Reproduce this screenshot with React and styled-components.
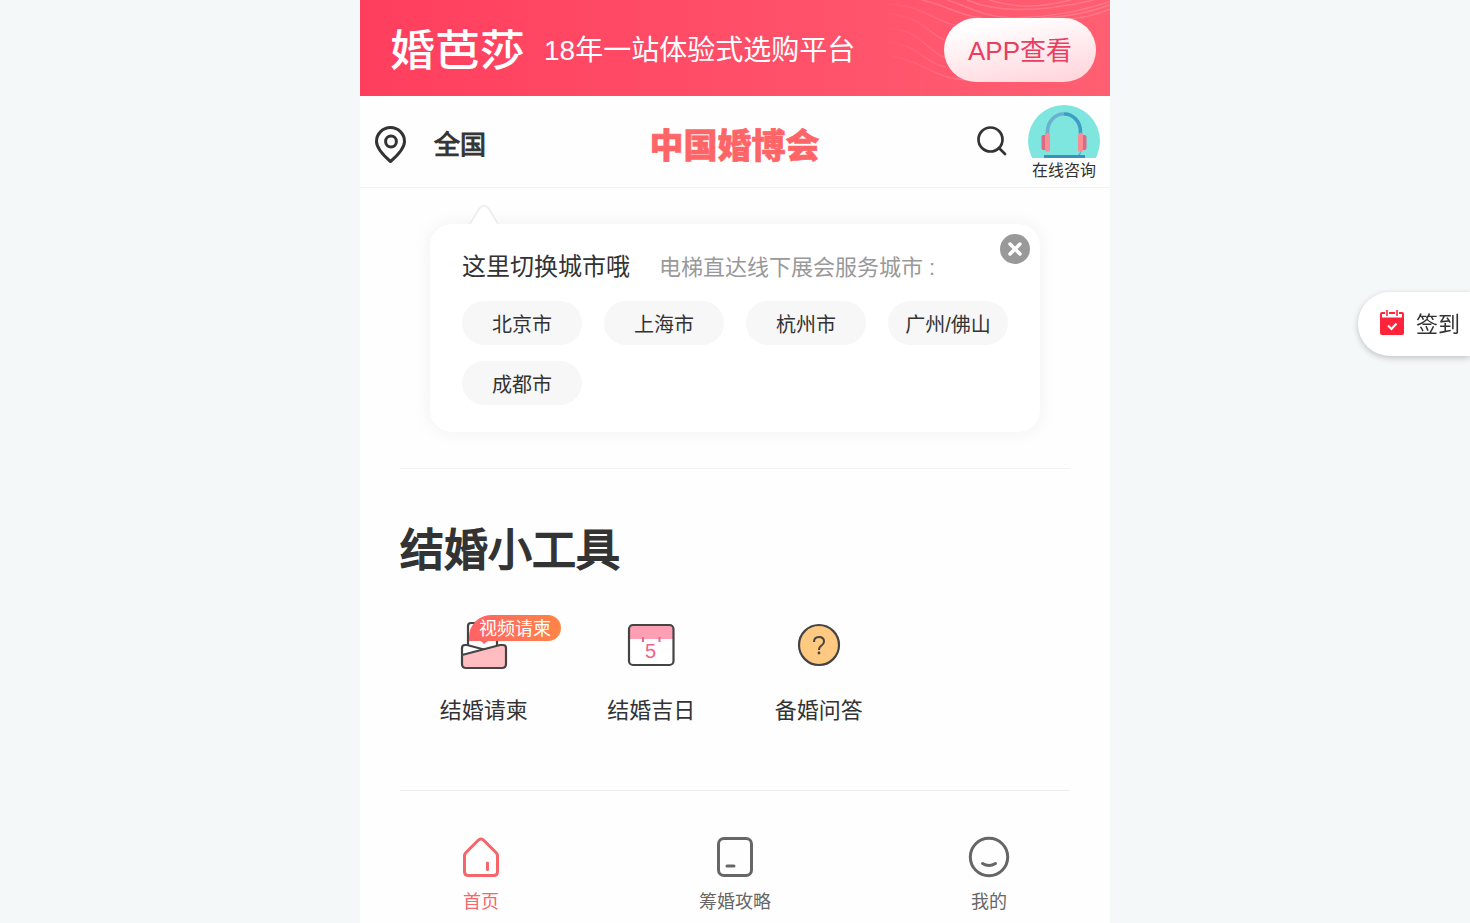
import React from "react";
import styled, { createGlobalStyle } from "styled-components";

const Global = createGlobalStyle`
  * { box-sizing: border-box; }
  body {
    margin: 0;
    background: #f4f8f9;
    color: #333;
    font-family: "Liberation Sans", "Noto Sans CJK SC", sans-serif;
    overflow: hidden;
  }
  svg { display: block; }
`;

const Page = styled.main`
  display: flex;
  flex-direction: column;
  width: 750px;
  height: 923px;
  margin: 0 auto;
  background: #fefefe;
`;

const Banner = styled.header`
  position: relative;
  display: flex;
  align-items: center;
  height: 96px;
  padding: 4px 14px 0 30px;
  background: linear-gradient(90deg, #ff3e5e, #ff5f72);
  color: #fff;
`;

const Waves = styled.svg`
  position: absolute;
  top: 0;
  right: 0;
`;

const BrandName = styled.span`
  width: 136px;
  padding-top: 3px;
  font-size: 45px;
  font-weight: 500;
  line-height: 60px;
  white-space: nowrap;
  transform: scaleY(0.96);
`;

const Slogan = styled.span`
  flex: 1;
  margin-left: 18px;
  padding-top: 1px;
  font-size: 28px;
  line-height: 40px;
`;

const AppButton = styled.button`
  position: relative;
  width: 152px;
  height: 64px;
  padding: 0 0 4px;
  border: 0;
  border-radius: 32px;
  background: linear-gradient(170deg, #fff 15%, #ffd2d9);
  color: #e83f61;
  font: inherit;
  font-size: 26px;
`;

const NavBar = styled.nav`
  display: flex;
  align-items: center;
  justify-content: space-between;
  flex: none;
  height: 92px;
  padding: 4px 10px 0 13px;
  border-bottom: 1px solid #f2f2f2;
`;

const NavSide = styled.div`
  display: flex;
  align-items: center;
  width: 200px;
  gap: ${(p) => p.$gap}px;
  justify-content: ${(p) => (p.$end ? "flex-end" : "flex-start")};
`;

const City = styled.span`
  padding-top: 2px;
  font-size: 26px;
  font-weight: 400;
  -webkit-text-stroke: 1px #333;
  line-height: 38px;
`;

const ExpoName = styled.h1`
  margin: 4px 4px 0 0;
  color: #ff6466;
  font-size: 34px;
  font-weight: 900;
  line-height: 44px;
  -webkit-text-stroke: 0.6px #ff6466;
`;

const Consult = styled.div`
  width: 72px;
  text-align: center;
  font-size: 16px;
  line-height: 25px;
  white-space: nowrap;
`;

const PopoverArea = styled.section`
  padding: 36px 70px;
`;

const Popover = styled.div`
  position: relative;
  height: 208px;
  padding: 21px 32px;
  border-radius: 22px;
  background: #fff;
  box-shadow: 0 0 20px rgba(0, 0, 0, 0.06);
`;

const PopoverTip = styled.svg`
  position: absolute;
  left: 38px;
  top: -20px;
`;

const CloseIcon = styled.svg`
  position: absolute;
  top: 10px;
  right: 10px;
`;

const PopoverHeading = styled.div`
  display: flex;
  align-items: center;
  height: 38px;
  gap: 29px;
  font-size: 24px;
`;

const Hint = styled.span`
  padding-top: 1px;
  color: #999;
  font-size: 22px;
`;

const CityGrid = styled.div`
  display: grid;
  grid-template-columns: repeat(4, 120px);
  gap: 16px 22px;
  margin-top: 18px;
`;

const CityChip = styled.span`
  height: 44px;
  border-radius: 22px;
  background: #f7f7f7;
  font-size: 20px;
  line-height: 48px;
  text-align: center;
`;

const Tools = styled.section`
  height: 323px;
  margin: 0 40px;
  border-top: 1px solid #f2f2f2;
  border-bottom: 1px solid #ededed;
`;

const ToolsTitle = styled.h2`
  margin: 49px 0 0;
  font-size: 44px;
  font-weight: 400;
  -webkit-text-stroke: 1.8px #333;
  line-height: 66px;
`;

const ToolGrid = styled.div`
  display: grid;
  grid-template-columns: repeat(4, 1fr);
  margin-top: 29px;
`;

const Tool = styled.div`
  position: relative;
  display: flex;
  flex-direction: column;
  align-items: center;
  gap: 21px;
  font-size: 22px;
  line-height: 34px;
`;

const Badge = styled.span`
  position: absolute;
  top: 2px;
  left: 69px;
  width: 92px;
  height: 26px;
  border-radius: 22px 13px 13px 0;
  background: linear-gradient(90deg, #ff6266, #ff8547);
  color: #fff;
  font-size: 18px;
  line-height: 28px;
  text-align: center;
`;

const TabBar = styled.footer`
  display: flex;
  justify-content: space-between;
  margin-top: 42px;
  padding: 0 67px;
`;

const Tab = styled.div`
  display: flex;
  flex-direction: column;
  align-items: center;
  gap: 10px;
  width: 108px;
  color: ${(p) => (p.$active ? "#f5666b" : "#666")};
  font-size: 18px;
  line-height: 28px;
`;

const SignIn = styled.aside`
  position: fixed;
  top: 292px;
  right: 0;
  display: flex;
  align-items: center;
  gap: 11px;
  width: 112px;
  height: 64px;
  padding: 0 0 4px 21px;
  border-radius: 32px 0 0 32px;
  background: #fff;
  box-shadow: 0 2px 6px rgba(0, 0, 0, 0.22);
  font-size: 22px;
  white-space: nowrap;
`;

const cities = ["北京市", "上海市", "杭州市", "广州/佛山", "成都市"];

const PinIcon = () => (
  <svg width="36" height="40" viewBox="0 -1 36 40" fill="none" stroke="#333" strokeWidth="3">
    <path d="M17.5 36.5C10 30 3.5 23.500 3.500 16.500a14 14 0 0 1 28 0C31.500 23.500 25 30 17.500 36.500Z" strokeLinejoin="round" />
    <circle cx="18" cy="16.500" r="5.400" />
  </svg>
);

const SearchIcon = () => (
  <svg width="32" height="36" viewBox="0 2 32 36" fill="none" stroke="#333" strokeWidth="2.700">
    <circle cx="14.500" cy="15.500" r="12" />
    <path d="m23 24 6 6" strokeLinecap="round" />
  </svg>
);

const HeadsetIcon = () => (
  <svg width="72" height="53" viewBox="0 0 72 53">
    <circle cx="36" cy="36" r="36" fill="#7ee5df" />
    <path d="M19.500 31V27A16 18 0 0 1 36 9" fill="none" stroke="#6bb0cc" strokeWidth="3.600" />
    <path d="M36 9A16 18 0 0 1 52.500 27V31" fill="none" stroke="#3f9dc5" strokeWidth="3.600" />
    <path d="M53 44q0 7-6 8H39" fill="none" stroke="#55b5cb" strokeWidth="1.500" />
    <path d="M17.500 30h-2q-2 0-2 2v11q0 2 2 2h2Z" fill="#d96b86" />
    <path d="M54.500 30h2q2 0 2 2v11q0 2-2 2h-2Z" fill="#d96b86" />
    <path d="M17 28q5-1 5 4v13q0 3-5 1Z" fill="#fa8c94" />
    <path d="M55 28q-5-1-5 4v13q0 3 5 1Z" fill="#fa8c94" />
    <path d="M16 50h41v3H16Z" fill="#3b91be" />
  </svg>
);

const InviteIcon = () => (
  <svg width="60" height="60" viewBox="0 0 60 60" fill="none" stroke="#444" strokeWidth="2.200" strokeLinejoin="round">
    <path d="M14 34V13q0-3 3-3h23q3 0 3 3v21" fill="#fff" />
    <path d="m27 28 3 3 4-3Z" fill="#ff6266" stroke="none" />
    <path d="M11 32h4l15 3 15-3h4q3 0 3 3v6H8v-6q0-3 3-3Z" fill="#fff" stroke="none" />
    <path d="M8 42v-7q0-3 3-3h2l17 4.500" />
    <path d="M8 42 46 32h3q3 0 3 3v16q0 4-4 4H12q-4 0-4-4Z" fill="#ffbdc1" />
  </svg>
);

const CalendarIcon = () => (
  <svg width="60" height="60" viewBox="0 0 60 60">
    <rect x="8" y="12" width="44" height="40" rx="4" fill="#fff" />
    <path d="M8 26V16q0-4 4-4h36q4 0 4 4v10Z" fill="#ff9fb4" />
    <rect x="8" y="12" width="44.500" height="40" rx="4" fill="none" stroke="#444" strokeWidth="2.200" />
    <path d="M22 24v5M38.500 24v5" stroke="#f06389" strokeWidth="2" />
    <text x="29.500" y="45" fontSize="20" textAnchor="middle" fill="#f06389">5</text>
  </svg>
);

const QuestionIcon = () => (
  <svg width="60" height="60" viewBox="0 0 60 60">
    <circle cx="30" cy="32" r="20" fill="#ffc981" stroke="#444" strokeWidth="2.200" />
    <path d="M25 29q0-5 5-5t5 4.500q0 2.500-2.500 4T30 37" fill="none" stroke="#444" strokeWidth="2" />
    <circle cx="30" cy="40" r="1.400" fill="#444" />
  </svg>
);

const HomeIcon = () => (
  <svg width="40" height="45" viewBox="0 0 40 45" fill="none" stroke="currentColor" strokeWidth="3" strokeLinejoin="round" strokeLinecap="round">
    <path d="M3.500 23q0-2 1.500-3.500L17 7.500q3-3 6 0l12 12q1.500 1.500 1.500 3.500v15.500q0 4-4 4h-25q-4 0-4-4Z" />
    <path d="M26.500 30v6.500" />
  </svg>
);

const GuideIcon = () => (
  <svg width="40" height="45" viewBox="0 0 40 45" fill="none" stroke="currentColor" strokeWidth="3" strokeLinecap="round">
    <rect x="3.500" y="5.500" width="33" height="37" rx="5.500" />
    <path d="M12 33h7" />
  </svg>
);

const SmileIcon = () => (
  <svg width="42" height="45" viewBox="0 0 42 45" fill="none" stroke="currentColor" strokeWidth="3" strokeLinecap="round">
    <circle cx="21" cy="24" r="18.700" />
    <path d="M14.500 30.500q6.500 4 13 0" />
  </svg>
);

const CheckinIcon = () => (
  <svg width="26" height="27" viewBox="0 -1 26 27">
    <path d="M1 8h24v15q0 2-2 2H3q-2 0-2-2Z" fill="#ff2439" />
    <path d="M3 2h20q2 0 2 2v5H1V4q0-2 2-2Z" fill="#ff2439" />
    <path d="M3 4h20v3.500H3Z" fill="#fff" />
    <path d="M8 0v6M18 0v6" stroke="#fff" strokeWidth="4" />
    <path d="M8 0v6M18 0v6" stroke="#ff2439" strokeWidth="1.600" />
    <path d="m9 15.500 3.500 3.500L17.500 13.500" fill="none" stroke="#fff" strokeWidth="2" />
  </svg>
);

const tools = [
  { label: "结婚请柬", Icon: InviteIcon, badge: "视频请柬" },
  { label: "结婚吉日", Icon: CalendarIcon },
  { label: "备婚问答", Icon: QuestionIcon },
];

const tabs = [
  { label: "首页", Icon: HomeIcon, active: true },
  { label: "筹婚攻略", Icon: GuideIcon },
  { label: "我的", Icon: SmileIcon },
];

export default function App() {
  return (
    <>
      <Global />
      <Page>
        <Banner>
          <Waves width="250" height="96" viewBox="0 0 250 96" fill="none" stroke="#fff" strokeOpacity=".16" strokeWidth="1.500">
            <defs>
              <linearGradient id="fade" gradientUnits="userSpaceOnUse" x1="20" y1="0" x2="110" y2="0">
                <stop offset="0" stopColor="#fff" stopOpacity="0" />
                <stop offset="1" stopColor="#fff" stopOpacity=".16" />
              </linearGradient>
            </defs>
            <path d="M62 0C92 7 97 15 122 18M87 0C110 7 121 16 151 18M107 0c28 12 70 13 127 0M129 0c26 8 49 8 82 0M151 18c40-1 66-6 98-16M181 18c30-1 50-6 69-13M210 19q22-2 40-10" />
            <path d="M22 4C70 4 72 26 112 27M24 14C64 14 68 38 96 44M26 28c34 0 42 25 60 30M28 43c29 0 37 21 58 24M32 56c30 4 42 25 82 24" stroke="url(#fade)" strokeOpacity="1" />
          </Waves>
          <BrandName>婚芭莎</BrandName>
          <Slogan>18年一站体验式选购平台</Slogan>
          <AppButton>APP查看</AppButton>
        </Banner>
        <NavBar>
          <NavSide $gap={25}>
            <PinIcon />
            <City>全国</City>
          </NavSide>
          <ExpoName>中国婚博会</ExpoName>
          <NavSide $end $gap={20}>
            <SearchIcon />
            <Consult>
              <HeadsetIcon />
              在线咨询
            </Consult>
          </NavSide>
        </NavBar>
        <PopoverArea>
          <Popover>
            <PopoverTip width="32" height="22" viewBox="0 0 32 22">
              <path d="M2 20 11 5q5-7 10 0l9 15v2H2Z" fill="#fff" />
              <path d="M2 20 11 5q5-7 10 0l9 15" fill="none" stroke="#ececec" strokeWidth="1.500" />
            </PopoverTip>
            <CloseIcon width="30" height="30" viewBox="0 0 30 30">
              <circle cx="15" cy="15" r="15" fill="#999" />
              <path d="m10 10 10 10M20 10 10 20" stroke="#fff" strokeWidth="3.500" strokeLinecap="round" />
            </CloseIcon>
            <PopoverHeading>
              这里切换城市哦
              <Hint>电梯直达线下展会服务城市 :</Hint>
            </PopoverHeading>
            <CityGrid>
              {cities.map((c) => (
                <CityChip key={c}>{c}</CityChip>
              ))}
            </CityGrid>
          </Popover>
        </PopoverArea>
        <Tools>
          <ToolsTitle>结婚小工具</ToolsTitle>
          <ToolGrid>
            {tools.map(({ label, Icon, badge }) => (
              <Tool key={label}>
                <Icon />
                {badge && <Badge>{badge}</Badge>}
                {label}
              </Tool>
            ))}
          </ToolGrid>
        </Tools>
        <TabBar>
          {tabs.map(({ label, Icon, active }) => (
            <Tab key={label} $active={active}>
              <Icon />
              {label}
            </Tab>
          ))}
        </TabBar>
      </Page>
      <SignIn>
        <CheckinIcon />
        签到
      </SignIn>
    </>
  );
}
